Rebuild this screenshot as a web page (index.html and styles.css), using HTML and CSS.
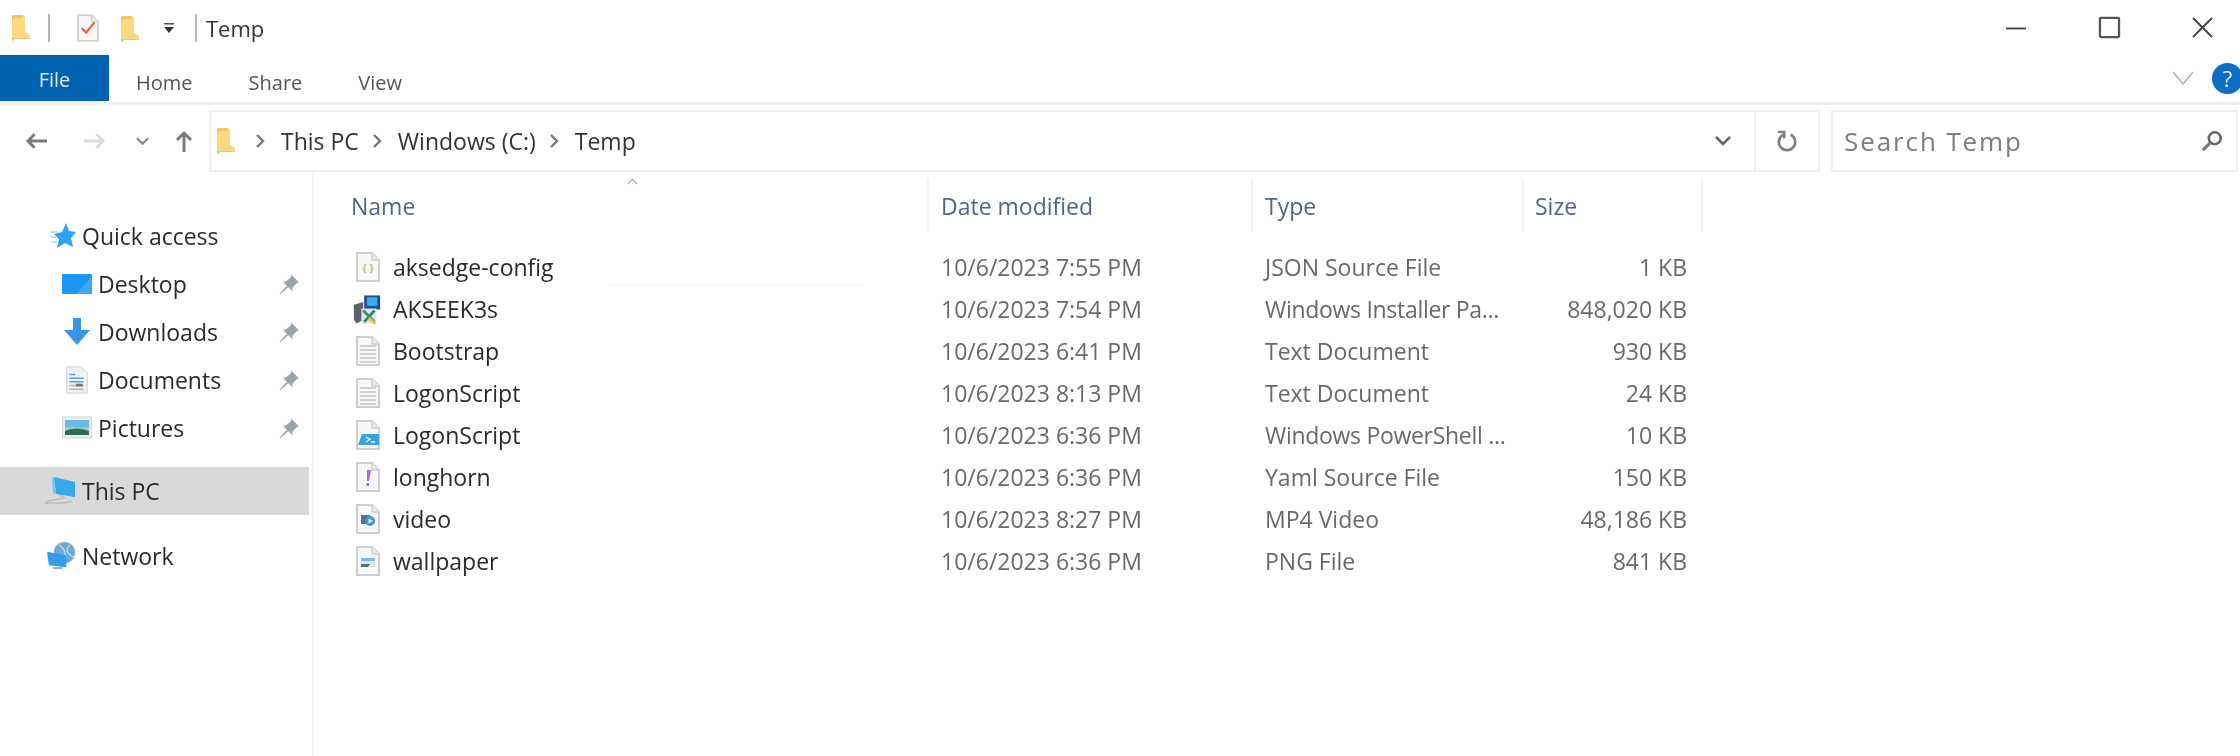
FILE: index.html
```html
<!DOCTYPE html>
<html lang="en">
<head>
    <meta charset="UTF-8">
    <title>Temp</title>
    <link rel="stylesheet" href="styles.css">
</head>
<body>

<svg class="defs" aria-hidden="true">
    <symbol id="folder" viewBox="0 0 18 26">
        <path d="M0 2 Q0 0 2 0 H9 L11 3 V0 H11 L13 2 V17 L18 20 V24 H3 L1 26 L0 24 Z" fill="#fbd981"/>
        <path d="M0 2 Q0 0 2 0 H11 V3 H3 L1 5 H0 Z" fill="#f4c65f"/>
        <path d="M0 23 H18 V24 H3 L1 26 L0 24 Z" fill="#e9c774"/>
    </symbol>
    <symbol id="doc" viewBox="0 0 24 30">
        <path d="M1 1 H16 L23 8 V29 H1 Z" fill="#f8f8f8" stroke="#cfcfcf" stroke-width="2"/>
        <path d="M16 1 V8 H23" fill="#ececec" stroke="#cfcfcf" stroke-width="1.4"/>
    </symbol>
    <symbol id="pin" viewBox="0 0 22 22">
        <path d="M13 1 L21 9 L18 10 L14 15 L14 18 L4 8 L7 8 L12 4 Z" fill="#98a2a9"/>
        <path d="M8 13 L1 21 L9 14 Z" fill="#98a2a9" stroke="#98a2a9"/>
    </symbol>
</svg>

<div class="window">
    <header class="titlebar">
        <svg class="ico qa-folder"><use href="#folder"/></svg>
        <span class="qa-sep"></span>
        <svg class="ico qa-check" viewBox="0 0 24 30">
            <use href="#doc" width="24" height="30"/>
            <path d="M5 15 L10 20 L19 9" fill="none" stroke="#e8673a" stroke-width="2.4"/>
        </svg>
        <svg class="ico qa-folder2"><use href="#folder"/></svg>
        <svg class="ico qa-drop" viewBox="0 0 12 10">
            <rect x="1" y="0" width="10" height="1.5" fill="#555"/>
            <path d="M1 4 H11 L6 10 Z" fill="#333"/>
        </svg>
        <span class="qa-sep qa-sep-last"></span>
        <span class="title">Temp</span>
        <div class="winbtns">
            <svg class="ico win-btn" viewBox="0 0 22 22"><path d="M0 12 H21" stroke="#444" stroke-width="2"/></svg>
            <svg class="ico win-btn" viewBox="0 0 22 22"><rect x="1" y="1" width="20" height="20" rx="1" fill="none" stroke="#555" stroke-width="2.4"/></svg>
            <svg class="ico win-btn" viewBox="0 0 22 22"><path d="M1 1 L21 21 M21 1 L1 21" stroke="#444" stroke-width="2"/></svg>
        </div>
    </header>

    <nav class="tabs">
        <span class="tab tab-file">File</span>
        <span class="tab tab-home">Home</span>
        <span class="tab tab-share">Share</span>
        <span class="tab tab-view">View</span>
        <svg class="ico ribbon-chev" viewBox="0 0 22 14"><path d="M1 1 L11 13 L21 1" fill="none" stroke="#b4b4b4" stroke-width="1.6"/></svg>
        <span class="help">?</span>
    </nav>

    <div class="navbar">
        <div class="navbtns">
            <svg class="ico nav-back" viewBox="0 0 24 18"><path d="M23 9 H3 M10 2 L3 9 L10 16" fill="none" stroke="#7a7a7a" stroke-width="3"/></svg>
            <svg class="ico nav-fwd" viewBox="0 0 24 18"><path d="M1 9 H21 M14 2 L21 9 L14 16" fill="none" stroke="#dcdcdc" stroke-width="3"/></svg>
            <svg class="ico nav-recent" viewBox="0 0 14 9"><path d="M1 1 L7 7 L13 1" fill="none" stroke="#888" stroke-width="2.2"/></svg>
            <svg class="ico nav-up" viewBox="0 0 18 22"><path d="M9 22 V3 M2 10 L9 3 L16 10" fill="none" stroke="#7a7a7a" stroke-width="3"/></svg>
        </div>
        <div class="address">
            <svg class="ico addr-folder"><use href="#folder"/></svg>
            <svg class="ico crumb-chev" viewBox="0 0 10 14"><path d="M2 1 L8 7 L2 13" fill="none" stroke="#777" stroke-width="2.4"/></svg>
            <span class="crumb">This PC</span>
            <svg class="ico crumb-chev" viewBox="0 0 10 14"><path d="M2 1 L8 7 L2 13" fill="none" stroke="#777" stroke-width="2.4"/></svg>
            <span class="crumb">Windows (C:)</span>
            <svg class="ico crumb-chev" viewBox="0 0 10 14"><path d="M2 1 L8 7 L2 13" fill="none" stroke="#777" stroke-width="2.4"/></svg>
            <span class="crumb">Temp</span>
            <svg class="ico addr-drop" viewBox="0 0 16 10"><path d="M1 1 L8 8 L15 1" fill="none" stroke="#666" stroke-width="2.6"/></svg>
            <div class="addr-refresh">
                <svg class="ico refresh" viewBox="0 0 22 24"><path d="M15 5 A9 9 0 1 1 7 5" fill="none" stroke="#808080" stroke-width="3"/><path d="M1 2 H8 V9" fill="none" stroke="#808080" stroke-width="2.8"/></svg>
            </div>
        </div>
        <div class="search">
            <span class="search-text">Search Temp</span>
            <svg class="ico search-ico" viewBox="0 0 24 24"><circle cx="15" cy="9" r="6.5" fill="none" stroke="#666" stroke-width="2.8"/><path d="M10 14 L2 22" stroke="#777" stroke-width="3.4"/></svg>
        </div>
    </div>

    <div class="main">
        <aside class="sidebar">
            <div class="side-item top-item first">
                <svg class="ico side-ico" viewBox="0 0 26 26"><path d="M16 0 L19 8 L26 9 L21 15 L23 24 L15 20 L7 25 L9 16 L4 11 L12 9 Z" fill="#2aa5f0"/><path d="M0 9 H8 M0 14 H6 M1 19 H7" stroke="#a9d9f7" stroke-width="1.4"/></svg>
                <span>Quick access</span>
            </div>
            <div class="side-item sub-item">
                <svg class="ico sub-ico" viewBox="0 0 30 22"><rect width="30" height="20" y="1" rx="1" fill="#1c97f3"/><path d="M14 21 L30 4 V21 Z" fill="#3cabf7"/></svg>
                <span>Desktop</span>
                <svg class="ico pin"><use href="#pin"/></svg>
            </div>
            <div class="side-item sub-item">
                <svg class="ico sub-ico" viewBox="0 0 30 28"><path d="M11 0 H19 V12 H28 L15 27 L2 12 H11 Z" fill="#3a94e6"/></svg>
                <span>Downloads</span>
                <svg class="ico pin"><use href="#pin"/></svg>
            </div>
            <div class="side-item sub-item">
                <svg class="ico sub-ico" viewBox="0 0 30 30">
                    <path d="M4 1 H19 L26 7 V29 H4 Z" fill="#f2f2f2" stroke="#cfcfcf"/>
                    <path d="M7 9 H13 M7 13 H22 M7 17 H22" stroke="#4aa8e8" stroke-width="1.6"/>
                    <path d="M7 21 H22 M7 25 H22" stroke="#b5b5b5" stroke-width="1.6"/>
                    <rect x="14" y="19" width="7" height="3" fill="#5f8078"/>
                </svg>
                <span>Documents</span>
                <svg class="ico pin"><use href="#pin"/></svg>
            </div>
            <div class="side-item sub-item">
                <svg class="ico sub-ico" viewBox="0 0 30 24">
                    <rect x="0.5" y="1" width="29" height="21" fill="#e9eef2" stroke="#cfd6da"/>
                    <rect x="3" y="4" width="24" height="7" fill="#6ab7ea"/>
                    <rect x="3" y="11" width="24" height="4" fill="#a3c7b8"/>
                    <path d="M3 15 Q14 10 27 15 V19 H3 Z" fill="#2f6a55"/>
                </svg>
                <span>Pictures</span>
                <svg class="ico pin"><use href="#pin"/></svg>
            </div>
            <div class="side-item top-item selected">
                <svg class="ico side-ico pc-ico" viewBox="0 0 30 28">
                    <path d="M8 0 L29 5 V20 L10 17 Z" fill="#35a8ea"/>
                    <path d="M8 0 L10 17 L7 16 L6 1 Z" fill="#7cc4ee"/>
                    <path d="M14 18 L18 21 L2 24 L0 26 H18 L26 24" fill="none" stroke="#b4bcc0" stroke-width="1.6"/>
                </svg>
                <span>This PC</span>
            </div>
            <div class="side-item top-item">
                <svg class="ico side-ico net-ico" viewBox="0 0 30 30">
                    <circle cx="18" cy="11" r="11" fill="#6fa8d2"/>
                    <path d="M12 3 Q22 8 18 22 M24 3 Q16 10 28 16" fill="none" stroke="#cfe2ef" stroke-width="1.2"/>
                    <path d="M0 10 L20 14 V26 L2 24 Z" fill="#2f9fe6"/>
                    <path d="M6 26 H16 V28 H6 Z" fill="#9aa7ae"/>
                </svg>
                <span>Network</span>
            </div>
        </aside>

        <section class="files">
            <span class="sort-caret"></span>
            <div class="head">
                <span class="col col-name">Name</span>
                <span class="col col-date">Date modified</span>
                <span class="col col-type">Type</span>
                <span class="col col-size">Size</span>
            </div>
            <div class="rows">
                <div class="row row-first">
                    <span class="col-name name">
                        <svg class="ico file-ico" viewBox="0 0 24 30">
                            <use href="#doc" width="24" height="30"/>
                            <text class="brace" x="12" y="20" text-anchor="middle">{ }</text>
                        </svg>
                        aksedge-config
                    </span>
                    <span class="col-date">10/6/2023 7:55 PM</span>
                    <span class="col-type">JSON Source File</span>
                    <span class="col-size">1 KB</span>
                </div>
                <div class="row">
                    <span class="col-name name">
                        <svg class="ico file-ico installer" viewBox="0 0 32 34">
                            <rect x="13" y="2" width="17" height="15" fill="#1f4f8f"/>
                            <rect x="16" y="4" width="11" height="9" fill="#39b0ee"/>
                            <path d="M2 12 L12 9 V28 L5 32 L2 28 Z" fill="#5b6268"/>
                            <rect x="10" y="16" width="16" height="16" fill="#dfe4e6"/>
                            <path d="M12 18 L24 30 M24 18 L13 30" stroke="#2e8f6e" stroke-width="3"/>
                            <path d="M18 26 L25 32" stroke="#e6c13b" stroke-width="3"/>
                        </svg>
                        AKSEEK3s
                    </span>
                    <span class="col-date">10/6/2023 7:54 PM</span>
                    <span class="col-type narrow">Windows Installer Pa...</span>
                    <span class="col-size">848,020 KB</span>
                </div>
                <div class="row">
                    <span class="col-name name">
                        <svg class="ico file-ico" viewBox="0 0 24 30">
                            <use href="#doc" width="24" height="30"/>
                            <path d="M4 10 H20 M4 14 H20 M4 18 H20 M4 22 H20 M4 26 H20" stroke="#c4c4c4" stroke-width="1.5"/>
                        </svg>
                        Bootstrap
                    </span>
                    <span class="col-date">10/6/2023 6:41 PM</span>
                    <span class="col-type">Text Document</span>
                    <span class="col-size">930 KB</span>
                </div>
                <div class="row">
                    <span class="col-name name">
                        <svg class="ico file-ico" viewBox="0 0 24 30">
                            <use href="#doc" width="24" height="30"/>
                            <path d="M4 10 H20 M4 14 H20 M4 18 H20 M4 22 H20 M4 26 H20" stroke="#c4c4c4" stroke-width="1.5"/>
                        </svg>
                        LogonScript
                    </span>
                    <span class="col-date">10/6/2023 8:13 PM</span>
                    <span class="col-type">Text Document</span>
                    <span class="col-size">24 KB</span>
                </div>
                <div class="row">
                    <span class="col-name name">
                        <svg class="ico file-ico" viewBox="0 0 24 30">
                            <use href="#doc" width="24" height="30"/>
                            <path d="M6 14 H23 V25 H2 Z" fill="#3aa1dc"/>
                            <path d="M10 17 L14 19.5 L10 22 M15 22 H19" fill="none" stroke="#e4f3fc" stroke-width="1.4"/>
                        </svg>
                        LogonScript
                    </span>
                    <span class="col-date">10/6/2023 6:36 PM</span>
                    <span class="col-type narrow">Windows PowerShell ...</span>
                    <span class="col-size">10 KB</span>
                </div>
                <div class="row">
                    <span class="col-name name">
                        <svg class="ico file-ico" viewBox="0 0 24 30">
                            <use href="#doc" width="24" height="30"/>
                            <path d="M11 8 H15 L13 19 H11 Z M10.5 21 H13 V24 H10.5 Z" fill="#a86cc8"/>
                        </svg>
                        longhorn
                    </span>
                    <span class="col-date">10/6/2023 6:36 PM</span>
                    <span class="col-type">Yaml Source File</span>
                    <span class="col-size">150 KB</span>
                </div>
                <div class="row">
                    <span class="col-name name">
                        <svg class="ico file-ico" viewBox="0 0 24 30">
                            <use href="#doc" width="24" height="30"/>
                            <rect x="5" y="11" width="9" height="9" fill="#5f6f84"/>
                            <circle cx="14" cy="17" r="5" fill="#3f97da"/>
                            <path d="M12.5 14.5 L17 17 L12.5 19.5 Z" fill="#e8f3fb"/>
                        </svg>
                        video
                    </span>
                    <span class="col-date">10/6/2023 8:27 PM</span>
                    <span class="col-type">MP4 Video</span>
                    <span class="col-size">48,186 KB</span>
                </div>
                <div class="row">
                    <span class="col-name name">
                        <svg class="ico file-ico" viewBox="0 0 24 30">
                            <use href="#doc" width="24" height="30"/>
                            <rect x="5" y="12" width="14" height="3" fill="#7db8e8"/>
                            <rect x="5" y="15" width="14" height="6" fill="#dfe7e4"/>
                            <path d="M5 18 H14 L12 21 H5 Z" fill="#4f7a68"/>
                        </svg>
                        wallpaper
                    </span>
                    <span class="col-date">10/6/2023 6:36 PM</span>
                    <span class="col-type">PNG File</span>
                    <span class="col-size">841 KB</span>
                </div>
            </div>
        </section>
    </div>
</div>

</body>
</html>
```

FILE: styles.css
```css
html, body {
    margin: 0;
    padding: 0;
    background-color: #fff;
}
body {
    font-family: "Open Sans", "Noto Sans", sans-serif;
    font-size: 23px;
    color: #2b2b2b;
    overflow: hidden;
}
.defs {
    display: none;
}
.window {
    width: 2240px;
    height: 756px;
    display: flex;
    flex-direction: column;
    filter: blur(0.7px);
}
.ico {
    display: block;
    flex: none;
    overflow: visible;
}

/* title bar */
.titlebar {
    height: 55px;
    display: flex;
    align-items: center;
    padding-left: 12px;
}
.qa-folder {
    width: 18px;
    height: 26px;
}
.qa-sep {
    width: 2px;
    height: 28px;
    background-color: #b5b5b5;
    margin-left: 18px;
}
.qa-check {
    width: 22px;
    height: 28px;
    margin-left: 27px;
}
.qa-folder2 {
    width: 18px;
    height: 26px;
    margin-left: 22px;
    margin-top: 3px;
}
.qa-drop {
    width: 12px;
    height: 10px;
    margin-left: 24px;
}
.qa-sep-last {
    margin-left: 20px;
}
.title {
    margin-left: 9px;
    color: #333;
    font-size: 22px;
}
.winbtns {
    margin-left: auto;
    margin-right: 27px;
    display: flex;
    gap: 72px;
}
.win-btn {
    width: 21px;
    height: 21px;
}

/* ribbon tabs */
.tabs {
    height: 46px;
    display: flex;
    align-items: center;
    border-bottom: 3px solid #f0f0f0;
    padding-bottom: 1px;
    color: #555;
    font-size: 20px;
}
.tab-file {
    width: 109px;
    height: 46px;
    line-height: 50px;
    text-align: center;
    background-color: #0063b1;
    color: #dbe9f5;
}
.tab-home, .tab-share, .tab-view {
    padding-top: 8px;
}
.tab-home {
    margin-left: 27px;
}
.tab-share {
    margin-left: 56px;
}
.tab-view {
    margin-left: 56px;
}
.ribbon-chev {
    width: 22px;
    height: 14px;
    margin-left: auto;
    margin-right: 18px;
}
.help {
    width: 31px;
    height: 31px;
    margin-right: -3px;
    border-radius: 50%;
    background-color: #0f6cc4;
    color: #e4eef8;
    text-align: center;
    line-height: 31px;
    font-size: 22px;
}

/* address row */
.navbar {
    height: 62px;
    margin-top: 5px;
    display: flex;
    align-items: stretch;
}
.navbtns {
    width: 209px;
    display: flex;
    align-items: center;
    padding-left: 25px;
    box-sizing: border-box;
}
.nav-back, .nav-fwd {
    width: 23px;
    height: 18px;
}
.nav-fwd {
    margin-left: 35px;
}
.nav-recent {
    width: 13px;
    height: 9px;
    margin-left: 30px;
}
.nav-up {
    width: 18px;
    height: 22px;
    margin-left: 26px;
}
.address {
    width: 1611px;
    display: flex;
    align-items: center;
    box-sizing: border-box;
    border: 2px solid #f0f0f0;
    padding-left: 6px;
}
.addr-folder {
    width: 18px;
    height: 26px;
}
.crumb-chev {
    width: 10px;
    height: 14px;
    margin: 0 16px 0 20px;
}
.crumb {
    color: #333;
}
.crumb + .crumb-chev {
    margin-left: 13px;
}
.addr-drop {
    width: 16px;
    height: 10px;
    margin-left: auto;
    margin-right: 23px;
}
.addr-refresh {
    width: 62px;
    height: 100%;
    border-left: 2px solid #f0f0f0;
    display: flex;
    align-items: center;
    justify-content: center;
}
.refresh {
    width: 20px;
    height: 24px;
}
.search {
    width: 407px;
    margin-left: 11px;
    margin-right: 2px;
    box-sizing: border-box;
    border: 2px solid #f0f0f0;
    display: flex;
    align-items: center;
    padding: 0 13px 0 11px;
}
.search-text {
    color: #7d7d7d;
    font-size: 26px;
    letter-spacing: 1.9px;
}
.search-ico {
    width: 22px;
    height: 22px;
    margin-left: auto;
}

/* main area */
.main {
    flex: 1;
    display: flex;
    min-height: 0;
}
.sidebar {
    width: 314px;
    box-sizing: border-box;
    border-right: 2px solid #f5f5f5;
    padding-top: 40px;
    padding-right: 3px;
}
.side-item {
    height: 48px;
    display: flex;
    align-items: center;
    color: #2b2b2b;
}
.top-item {
    padding-left: 50px;
}
.side-ico {
    width: 26px;
    height: 26px;
    margin-right: 6px;
}
.pc-ico {
    width: 30px;
    margin-left: -4px;
    height: 28px;
}
.net-ico {
    width: 29px;
    height: 29px;
    margin-left: -3px;
}
.sub-item {
    padding-left: 62px;
}
.sub-ico {
    width: 30px;
    height: 28px;
    margin-right: 6px;
}
.pin {
    width: 21px;
    height: 21px;
    margin-left: auto;
    margin-right: 9px;
}
.selected {
    background-color: #d9d9d9;
    margin-top: 15px;
    margin-bottom: 17px;
}

/* file list */
.files {
    flex: 1;
    position: relative;
    padding-top: 7px;
}
.sort-caret {
    position: absolute;
    left: 315px;
    top: 8px;
    width: 6px;
    height: 6px;
    border-left: 1px solid #9a9a9a;
    border-top: 1px solid #9a9a9a;
    transform: rotate(45deg);
}
.head, .row {
    display: flex;
    align-items: center;
}
.head {
    height: 53px;
    color: #53677f;
}
.head .col {
    height: 100%;
    display: flex;
    align-items: center;
    box-sizing: border-box;
    border-right: 2px solid #f3f4f7;
}
.col-name {
    width: 615px;
    padding-left: 37px;
    box-sizing: border-box;
}
.col-date {
    width: 324px;
    padding-left: 12px;
    box-sizing: border-box;
}
.col-type {
    width: 271px;
    padding-left: 12px;
    box-sizing: border-box;
    white-space: nowrap;
}
.narrow {
    letter-spacing: -0.3px;
}
.col-size {
    width: 179px;
    padding-left: 11px;
    box-sizing: border-box;
}
.rows {
    padding-top: 14px;
}
.row {
    height: 42px;
    color: #696969;
    position: relative;
}
.row .col-size {
    text-align: right;
    padding-right: 16px;
}
.row-first::after {
    content: "";
    position: absolute;
    left: 294px;
    top: 38px;
    width: 256px;
    height: 2px;
    background-color: #f6f9fd;
}
.name {
    display: flex;
    align-items: center;
    color: #2b2b2b;
}
.file-ico {
    width: 24px;
    height: 30px;
    margin: 0 13px 0 5px;
}
.installer {
    width: 30px;
    height: 33px;
    margin: 0 11px 0 1px;
}
.brace {
    font-size: 11px;
    font-weight: 700;
    fill: #b9c46a;
}
```
